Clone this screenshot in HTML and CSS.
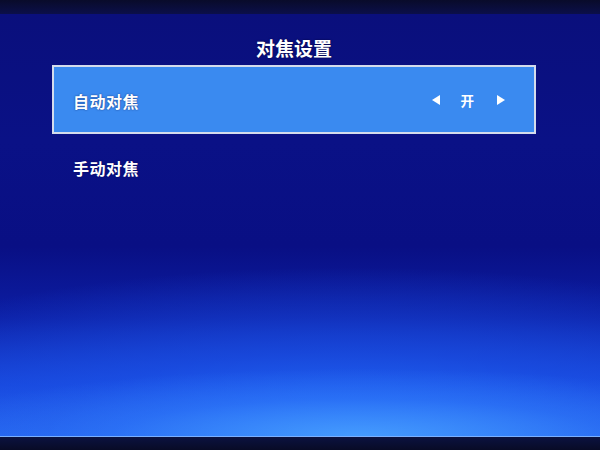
FILE: index.html
```html
<!DOCTYPE html>
<html lang="zh">
<head>
<meta charset="utf-8">
<title>对焦设置</title>
<link rel="stylesheet" href="styles.css">
</head>
<body>
<div class="frame">
  <div class="bezel-top"></div>
  <div class="screen">
    <h1 class="title">对焦设置</h1>
    <div class="menu">
      <div class="item selected">
        <span class="label">自动对焦</span>
        <span class="value">
          <span class="arrow left"></span>
          <span class="val-text">开</span>
          <span class="arrow right"></span>
        </span>
      </div>
      <div class="item">
        <span class="label">手动对焦</span>
      </div>
    </div>
  </div>
  <div class="bezel-bottom"></div>
</div>
</body>
</html>
```

FILE: styles.css
```css
html, body {
  margin: 0;
  padding: 0;
  background: #080b26;
}
.frame {
  width: 600px;
  height: 450px;
  display: flex;
  flex-direction: column;
  overflow: hidden;
  font-family: "Noto Sans CJK SC", "Noto Sans", sans-serif;
  color: #ffffff;
}
.bezel-top {
  height: 14px;
  flex: none;
  background: linear-gradient(#090b2a, #0b0f4a);
}
.screen {
  flex: none;
  height: 422px;
  display: flex;
  flex-direction: column;
  background:
    radial-gradient(ellipse 75% 16% at 60% 100%, rgba(80,170,255,0.75) 0%, rgba(60,140,255,0.35) 55%, rgba(40,100,240,0) 100%),
    radial-gradient(ellipse 100% 40% at 58% 100%, rgba(35,110,250,0.95) 0%, rgba(28,85,235,0.6) 50%, rgba(20,40,170,0) 100%),
    linear-gradient(#0a0f7c 0%, #0a1186 30%, #090f84 55%, #0c1ea4 72%, #1744d8 88%, #2a6cf0 100%);
  border-bottom: 1px solid #7ab0ff;
}
.title {
  margin: 24px 64px 7px 52px;
  font-size: 19px;
  line-height: 20px;
  font-weight: 700;
  text-align: center;
  text-shadow: 0 0 2px rgba(0,0,40,0.8);
}
.menu {
  display: flex;
  flex-direction: column;
  margin: 0 64px 0 52px;
}
.item {
  height: 68px;
  display: flex;
  align-items: center;
  justify-content: space-between;
  padding: 0 28px 0 21px;
  box-sizing: border-box;
}
.item.selected {
  height: 69px;
  background: #3a8af0;
  border: 2px solid #d4dcec;
  padding-left: 19px;
  padding-right: 29px;
}
.label {
  font-size: 16px;
  font-weight: 700;
  line-height: 20px;
  letter-spacing: 0.5px;
  text-shadow: 0 0 2px rgba(0,0,60,0.6);
}
.item.selected .label {
  margin-top: 2px;
}
.value {
  display: flex;
  align-items: center;
  gap: 21px;
}
.val-text {
  font-size: 13.5px;
  font-weight: 700;
  line-height: 18px;
  margin-right: 2px;
}
.arrow {
  width: 0;
  height: 0;
  border-top: 5px solid transparent;
  border-bottom: 5px solid transparent;
}
.arrow.left {
  border-right: 8px solid #ffffff;
}
.arrow.right {
  border-left: 8px solid #ffffff;
}
.bezel-bottom {
  flex: 1;
  background: linear-gradient(#0b1240, #080b26);
}
```
